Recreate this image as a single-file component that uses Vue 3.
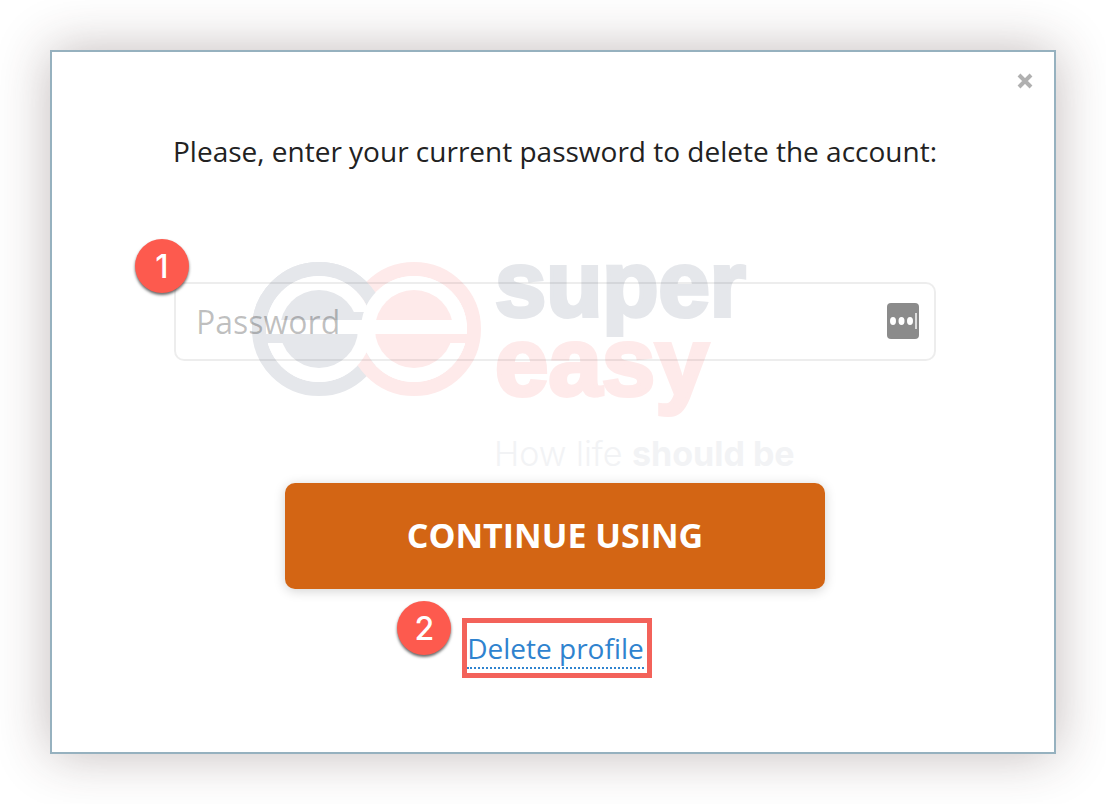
<script setup>
import { ref } from 'vue'

const password = ref('')
</script>

<template>
  <main class="page">
    <section class="dialog" role="dialog" aria-labelledby="dialog-title">
      <svg class="watermark" viewBox="0 0 560 224" aria-hidden="true">
        <g fill="none" stroke-width="14">
          <circle cx="76" cy="79" r="60" stroke="#e5e7eb" />
          <circle cx="171" cy="79" r="60" stroke="#feeaea" />
          <path d="M16 79a60 60 0 0 1 120 0" stroke="#e5e7eb" />
        </g>
        <circle cx="76" cy="79" r="53" fill="#fff" />
        <circle cx="76" cy="79" r="39" fill="#e5e7eb" />
        <path d="M76 62h50v8H76zM19 84h57v9H19z" fill="#e5e7eb" />
        <path d="M24 70h102v14H24z" fill="#fff" />
        <circle cx="171" cy="79" r="53" fill="#fff" />
        <circle cx="171" cy="79" r="39" fill="#feeaea" />
        <path d="M171 84h56v9h-56z" fill="#feeaea" />
        <path d="M130 70h92v14h-92z" fill="#fff" />
        <text class="word" x="252" y="66" fill="#e5e7eb" stroke="#e5e7eb">super</text>
        <text class="word word-large" x="252" y="145" fill="#feeaea" stroke="#feeaea">easy</text>
        <text class="slogan" x="251" y="216">How life <tspan class="strong">should be</tspan></text>
      </svg>

      <button class="close" type="button" aria-label="Close">
        <svg viewBox="0 0 18 18" width="18" height="18">
          <path d="M3 3l12 12M15 3L3 15" stroke="#b0b0b0" stroke-width="4" />
        </svg>
      </button>

      <form class="form" @submit.prevent>
        <label id="dialog-title" class="title" for="password">Please, enter your current password to delete the account:</label>
        <div class="field">
          <input id="password" v-model="password" class="input" type="password" placeholder="Password" />
          <button class="manager" type="button" aria-label="Fill password">
            <svg viewBox="0 0 32 36" width="32" height="36">
              <rect width="32" height="36" rx="4" fill="#8b8b8b" />
              <ellipse cx="6" cy="18" rx="3" ry="4" fill="#fff" />
              <ellipse cx="14.500" cy="18" rx="3" ry="4" fill="#fff" />
              <ellipse cx="23" cy="18" rx="3" ry="4" fill="#fff" />
              <path d="M29 10v16" stroke="#ddd" stroke-width="2" />
            </svg>
          </button>
          <span class="badge badge-field">1</span>
        </div>
        <button class="continue" type="button">CONTINUE USING</button>
        <div class="highlight">
          <a class="delete" href="#delete">Delete profile</a>
          <span class="badge badge-delete">2</span>
        </div>
      </form>
    </section>
  </main>
</template>

<style>
body {
  margin: 0;
  background: #fff;
}
</style>

<style scoped>
.page {
  padding: 50px;
  font-family: "Open Sans", "Noto Sans", sans-serif;
  overflow: hidden;
}

.dialog {
  position: relative;
  box-sizing: border-box;
  padding: 80px 118px 74px 122px;
  border: 2px solid #96b1bf;
  background: #fff;
  box-shadow: 0 0 50px rgba(60, 35, 35, 0.31);
}

.watermark {
  position: absolute;
  top: 198px;
  left: calc(50% - 310px);
  width: 560px;
  height: 224px;
  overflow: visible;
  pointer-events: none;
}

.word {
  font: 700 92px "Liberation Sans", Arial, sans-serif;
  stroke-width: 4px;
}

.word-large {
  font-size: 96px;
}

.slogan {
  font: 300 34px Inter, sans-serif;
  fill: #f2f3f5;
}

.strong {
  font-weight: 700;
}

.close {
  position: absolute;
  top: 17px;
  right: 17px;
  display: grid;
  place-items: center;
  width: 24px;
  height: 24px;
  padding: 0;
  border: 0;
  background: none;
}

.form {
  position: relative;
  display: flex;
  flex-direction: column;
  align-items: center;
}

.title {
  color: #222;
  font-size: 28px;
  line-height: 38px;
  text-align: center;
  white-space: nowrap;
}

.field {
  position: relative;
  width: 100%;
  margin-top: 112px;
}

.input {
  display: block;
  box-sizing: border-box;
  width: 100%;
  height: 79px;
  padding: 0 80px 0 20px;
  border: 2px solid rgba(0, 0, 0, 0.07);
  border-radius: 10px;
  background: transparent;
  color: #222;
  font: 32px "Open Sans", "Noto Sans", sans-serif;
}

.input::placeholder {
  color: rgba(0, 0, 0, 0.25);
  opacity: 1;
}

.manager {
  position: absolute;
  top: 21px;
  right: 17px;
  display: block;
  padding: 0;
  border: 0;
  background: none;
}

.manager svg {
  display: block;
}

.continue {
  width: 540px;
  max-width: 100%;
  min-height: 106px;
  margin-top: 122px;
  padding: 0 0 2px;
  border: 0;
  border-radius: 10px;
  background: #d36514;
  box-shadow: 0 2px 12px rgba(0, 0, 0, 0.18);
  color: #fff;
  font: 700 34px "Open Sans", "Noto Sans", sans-serif;
}

.highlight {
  position: relative;
  margin: 29px 0 0 4px;
  padding: 6px 3px 4px 0;
  border: 5px solid #f3625a;
}

.delete {
  display: block;
  border-bottom: 2px dotted #2f83cf;
  color: #2f83cf;
  font-size: 28px;
  line-height: 38px;
  text-decoration: none;
}

.badge {
  position: absolute;
  display: grid;
  place-items: center;
  width: 54px;
  height: 54px;
  border-radius: 50%;
  background: #fd5a4e;
  box-shadow: 0 2px 3px rgba(0, 0, 0, 0.6);
  color: #fff;
  font: 500 32px Inter, sans-serif;
}

.badge-field {
  top: -43px;
  left: -39px;
}

.badge-delete {
  top: -22px;
  left: -70px;
}

@media (max-width: 1000px) {
  .title {
    white-space: normal;
  }
}
</style>
